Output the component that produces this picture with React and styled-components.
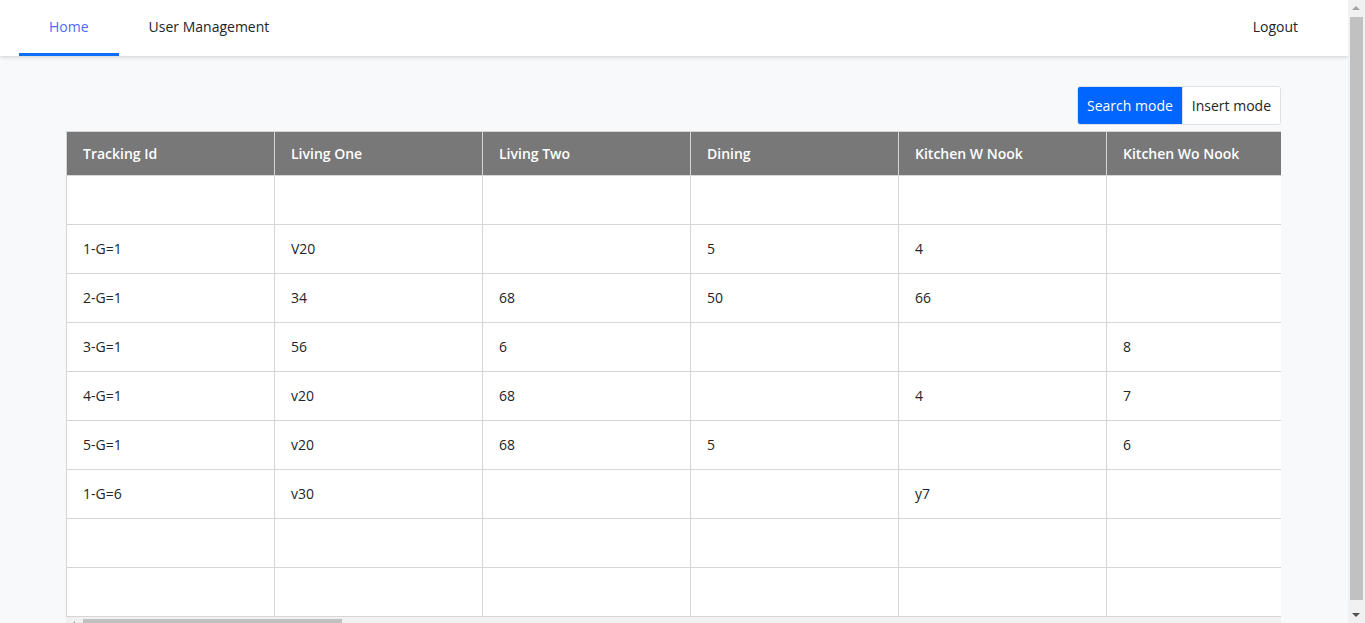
import React, { useState } from "react";
import styled, { createGlobalStyle } from "styled-components";

const GlobalStyle = createGlobalStyle`
  html, body {
    margin: 0;
    padding: 0;
  }
  body {
    font-family: "Open Sans", "Liberation Sans", sans-serif;
    font-size: 14px;
    color: #212529;
    background: #f8f9fa;
  }
  * {
    box-sizing: border-box;
  }
`;

const Page = styled.div`
  margin-right: 17px;
`;

const NavBar = styled.nav`
  display: flex;
  align-items: stretch;
  height: 56px;
  padding: 0 50px 0 19px;
  background: #fff;
  box-shadow: 0 1px 4px rgba(0, 0, 0, 0.18);
`;

const Tab = styled.a`
  display: flex;
  align-items: center;
  padding: 0 30px;
  color: ${(p) => (p.$active ? "#4d6bfe" : "#212529")};
  border-bottom: 3px solid ${(p) => (p.$active ? "#0d6efd" : "transparent")};
  cursor: pointer;
  text-decoration: none;
`;

const Spacer = styled.div`
  flex: 1;
`;

const LogoutLink = styled.a`
  display: flex;
  align-items: center;
  padding-bottom: 3px;
  color: #212529;
  cursor: pointer;
`;

const Main = styled.main`
  padding: 30px 67px 0 66px;
`;

const Toolbar = styled.div`
  display: flex;
  justify-content: flex-end;
  margin-bottom: 6px;
`;

const ModeGroup = styled.div`
  display: flex;
  border: 1px solid #dee2e6;
  border-radius: 3px;
  overflow: hidden;
`;

const ModeButton = styled.button`
  height: 37px;
  padding: 0 9px;
  font: inherit;
  font-size: 14px;
  border: none;
  background: ${(p) => (p.$active ? "#0066ff" : "#fff")};
  color: ${(p) => (p.$active ? "#fff" : "#212529")};
  cursor: pointer;
  & + & {
    border-left: 1px solid #dee2e6;
  }
`;

const TableScroll = styled.div`
  overflow-x: auto;
  overflow-y: hidden;
  scrollbar-width: none;
  &::-webkit-scrollbar {
    display: none;
  }
`;

const Table = styled.table`
  border-collapse: collapse;
  table-layout: fixed;
`;

const HeadCell = styled.th`
  width: 208px;
  min-width: 208px;
  height: 44px;
  padding: 0 16px 1px;
  background: #787878;
  color: #fff;
  font-weight: 600;
  font-size: 14px;
  text-align: left;
  border: 1px solid #d6d6d6;
  white-space: nowrap;
`;

const Cell = styled.td`
  height: 49px;
  padding: 0 16px 1px;
  background: #fff;
  border: 1px solid #d6d6d6;
  white-space: nowrap;
`;

const HBar = styled.div`
  position: relative;
  height: 17px;
  background: #f1f1f1;
`;

const HThumb = styled.div`
  position: absolute;
  top: 2px;
  bottom: 2px;
  left: 17px;
  width: 259px;
  background: #c1c1c1;
`;

const ArrowLeft = styled.div`
  position: absolute;
  left: 5px;
  top: 4px;
  border-style: solid;
  border-width: 4px 4px 4px 0;
  border-color: transparent #a3a3a3 transparent transparent;
`;

const VBar = styled.div`
  position: fixed;
  top: 0;
  right: 0;
  width: 17px;
  height: 100vh;
  background: #f1f1f1;
`;

const VThumb = styled.div`
  position: absolute;
  left: 2px;
  right: 2px;
  top: 17px;
  bottom: 23px;
  background: #c1c1c1;
`;

const ArrowUp = styled.div`
  position: absolute;
  left: 4px;
  top: 6px;
  border-style: solid;
  border-width: 0 4.5px 4.5px 4.5px;
  border-color: transparent transparent #a3a3a3 transparent;
`;

const ArrowDown = styled.div`
  position: absolute;
  left: 4px;
  bottom: 6px;
  border-style: solid;
  border-width: 4.5px 4.5px 0 4.5px;
  border-color: #505050 transparent transparent transparent;
`;

const columns = [
  "Tracking Id",
  "Living One",
  "Living Two",
  "Dining",
  "Kitchen W Nook",
  "Kitchen Wo Nook",
  "Family Room",
  "Great Room",
  "Den",
  "Study",
  "Bedroom One",
  "Bedroom Two",
  "Bedroom Three",
  "Bedroom Four",
  "Bath One",
  "Bath Two",
  "Bath Three",
  "Laundry",
  "Garage",
  "Basement",
  "Attic",
  "Porch",
  "Deck",
  "Patio",
  "Pool",
  "Notes",
];

const rows = [
  [],
  ["1-G=1", "V20", "", "5", "4", ""],
  ["2-G=1", "34", "68", "50", "66", ""],
  ["3-G=1", "56", "6", "", "", "8"],
  ["4-G=1", "v20", "68", "", "4", "7"],
  ["5-G=1", "v20", "68", "5", "", "6"],
  ["1-G=6", "v30", "", "", "y7", ""],
  [],
  [],
];

export default function App() {
  const [mode, setMode] = useState("search");

  return (
    <>
      <GlobalStyle />
      <Page>
        <NavBar>
          <Tab $active>Home</Tab>
          <Tab>User Management</Tab>
          <Spacer />
          <LogoutLink>Logout</LogoutLink>
        </NavBar>
        <Main>
          <Toolbar>
            <ModeGroup>
              <ModeButton $active={mode === "search"} onClick={() => setMode("search")}>
                Search mode
              </ModeButton>
              <ModeButton $active={mode === "insert"} onClick={() => setMode("insert")}>
                Insert mode
              </ModeButton>
            </ModeGroup>
          </Toolbar>
          <TableScroll>
            <Table>
              <thead>
                <tr>
                  {columns.map((c) => (
                    <HeadCell key={c}>{c}</HeadCell>
                  ))}
                </tr>
              </thead>
              <tbody>
                {rows.map((r, i) => (
                  <tr key={i}>
                    {columns.map((c, j) => (
                      <Cell key={c}>{r[j] || ""}</Cell>
                    ))}
                  </tr>
                ))}
              </tbody>
            </Table>
          </TableScroll>
          <HBar>
            <ArrowLeft />
            <HThumb />
          </HBar>
        </Main>
      </Page>
      <VBar>
        <ArrowUp />
        <VThumb />
        <ArrowDown />
      </VBar>
    </>
  );
}
